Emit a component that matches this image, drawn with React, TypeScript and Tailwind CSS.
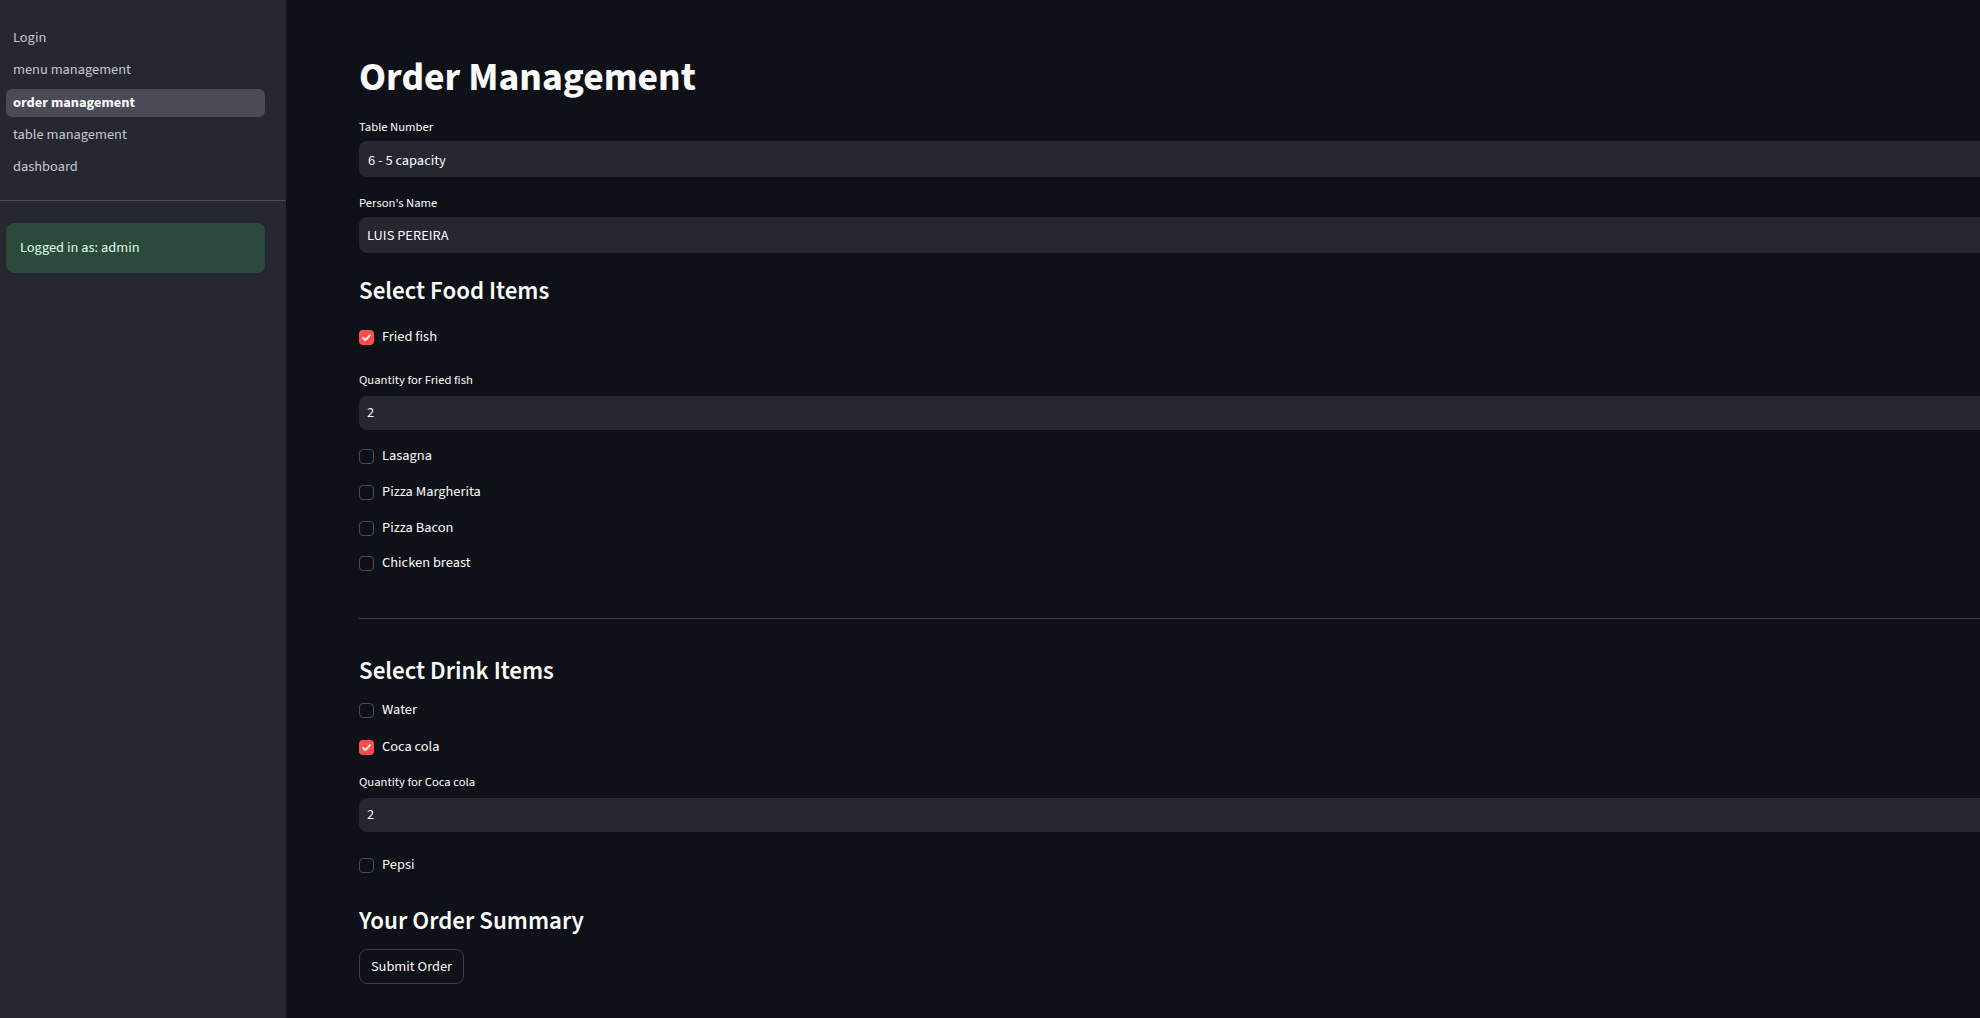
import React from "react";

const FONT = { fontFamily: '"Source Sans Pro", "Source Sans 3", Lato, "Noto Sans", sans-serif' };

function Check({ checked, label, className = "" }: { checked?: boolean; label: string; className?: string }) {
  return (
    <div className={`flex h-[24px] items-center ${className}`}>
      {checked ? (
        <div className="flex h-[15px] w-[15px] items-center justify-center rounded-[4px] bg-[#ff4b4b]">
          <svg width="11" height="11" viewBox="0 0 12 12" fill="none">
            <path d="M2.2 6.3 L4.8 8.8 L9.8 3.4" stroke="white" strokeWidth="2" strokeLinecap="round" strokeLinejoin="round" />
          </svg>
        </div>
      ) : (
        <div className="h-[15px] w-[15px] rounded-[4px] border border-[#4b4d56]" />
      )}
      <span className="ml-[8px] text-[14.4px] leading-[20px] text-[#fafafa]">{label}</span>
    </div>
  );
}

function Label({ text, className = "" }: { text: string; className?: string }) {
  return <div className={`h-[20px] text-[12.6px] leading-[20px] text-[#fafafa] ${className}`}>{text}</div>;
}

function Field({ value, h, className = "" }: { value: string; h: string; className?: string }) {
  return (
    <div className={`flex w-full items-center rounded-l-[8px] bg-[#262730] text-[14.4px] text-[#fafafa] ${h} ${className}`}>
      {value}
    </div>
  );
}

export default function App() {
  const nav = ["Login", "menu management", "order management", "table management", "dashboard"];
  return (
    <div className="flex h-[1018px] w-[1980px] overflow-hidden bg-[#0e1117]" style={FONT}>
      <aside className="flex h-full w-[286px] shrink-0 flex-col bg-[#262730]">
        <nav className="flex flex-col gap-[4.25px] pl-[6px] pr-[21px] pt-[24px]">
          {nav.map((n) => {
            const active = n === "order management";
            return (
              <div
                key={n}
                className={`flex h-[28px] items-center rounded-[6px] px-[7px] text-[14.4px] ${
                  active ? "bg-[#4a4b57] font-bold text-[#fafafa]" : "text-[#c4c8d4]"
                }`}
              >
                {n}
              </div>
            );
          })}
        </nav>
        <div className="mt-[19px] h-px w-full bg-[#4a4b55]" />
        <div className="ml-[6px] mr-[21px] mt-[22px] flex h-[50px] items-center rounded-[8px] bg-[#2c4a3c] px-[14px] text-[14.4px] text-[#dffde9]">
          Logged in as: admin
        </div>
      </aside>
      <main className="flex min-w-0 flex-1 flex-col pl-[73px]">
        <h1 className="mt-[54px] h-[48px] text-[39.6px] font-bold leading-[48px] text-[#fafafa]">Order Management</h1>
        <Label text="Table Number" className="mt-[15px]" />
        <Field value="6 - 5 capacity" h="h-[36px]" className="mt-[4px] pl-[9px] pt-[3px]" />
        <Label text="Person's Name" className="mt-[16px]" />
        <Field value="LUIS PEREIRA" h="h-[36px]" className="mt-[4px] pl-[8px] pt-[1px]" />
        <h2 className="mt-[22px] h-[32px] text-[25px] font-semibold leading-[32px] text-[#fafafa]">Select Food Items</h2>
        <Check checked label="Fried fish" className="mt-[18px]" />
        <Label text="Quantity for Fried fish" className="mt-[21px]" />
        <Field value="2" h="h-[34px]" className="mt-[6px] pl-[8px]" />
        <Check label="Lasagna" className="mt-[14px]" />
        <Check label="Pizza Margherita" className="mt-[12px]" />
        <Check label="Pizza Bacon" className="mt-[12px]" />
        <Check label="Chicken breast" className="mt-[11px]" />
        <div className="mt-[43px] h-px w-full bg-[#3d3f47]" />
        <h2 className="mt-[36px] h-[32px] text-[25px] font-semibold leading-[32px] text-[#fafafa]">Select Drink Items</h2>
        <Check label="Water" className="mt-[11px]" />
        <Check checked label="Coca cola" className="mt-[13px]" />
        <Label text="Quantity for Coca cola" className="mt-[13px]" />
        <Field value="2" h="h-[34px]" className="mt-[6px] pl-[8px]" />
        <Check label="Pepsi" className="mt-[21px]" />
        <h2 className="mt-[28px] h-[32px] text-[25px] font-semibold leading-[32px] text-[#fafafa]">Your Order Summary</h2>
        <div className="mt-[12px]">
          <button className="flex h-[35px] w-[105px] items-center justify-center rounded-[8px] border border-[#3d3f48] bg-[#0e1117] text-[14.4px] text-[#fafafa]">
            Submit Order
          </button>
        </div>
      </main>
    </div>
  );
}
